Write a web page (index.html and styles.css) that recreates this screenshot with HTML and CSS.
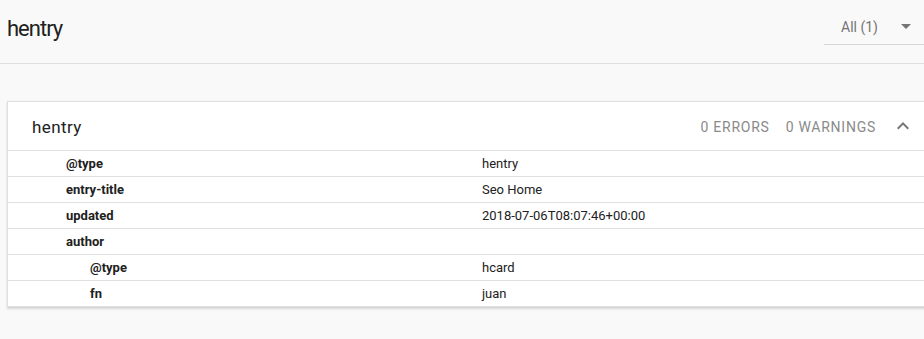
FILE: index.html
```html
<!DOCTYPE html>
<html>
<head>
<meta charset="utf-8">
<link rel="stylesheet" href="styles.css">
</head>
<body>
<header class="topbar">
  <h1 class="page-title">hentry</h1>
  <div class="filter">
    <span class="filter-label">All (1)</span>
    <span class="filter-arrow"></span>
  </div>
</header>
<main class="content">
  <section class="card">
    <div class="card-head">
      <h2 class="card-title">hentry</h2>
      <div class="card-stats">
        <span class="stat">0 ERRORS</span>
        <span class="stat">0 WARNINGS</span>
        <svg class="chevron" width="24" height="24" viewBox="0 0 24 24"><path d="M12 8l-6 6 1.41 1.41L12 10.83l4.59 4.58L18 14z" fill="#757575"/></svg>
      </div>
    </div>
    <div class="props">
      <div class="row"><div class="key">@type</div><div class="val">hentry</div></div>
      <div class="row"><div class="key">entry-title</div><div class="val">Seo Home</div></div>
      <div class="row"><div class="key">updated</div><div class="val">2018-07-06T08:07:46+00:00</div></div>
      <div class="row"><div class="key">author</div><div class="val"></div></div>
      <div class="row"><div class="key nested">@type</div><div class="val">hcard</div></div>
      <div class="row last"><div class="key nested">fn</div><div class="val">juan</div></div>
    </div>
  </section>
</main>
</body>
</html>
```

FILE: styles.css
```css
html, body {
  margin: 0;
  padding: 0;
}
body {
  background: #f9f9f9;
  font-family: Roboto, "Noto Sans", Arial, sans-serif;
  color: #212121;
  overflow: hidden;
  width: 924px;
  height: 339px;
}
.topbar {
  display: flex;
  justify-content: space-between;
  align-items: flex-start;
  height: 63px;
  border-bottom: 1px solid #e0e0e0;
  padding-left: 7px;
}
.page-title {
  margin: 0;
  font-size: 22px;
  font-weight: 400;
  line-height: 57px;
  letter-spacing: -1px;
  color: #212121;
}
.filter {
  display: flex;
  align-items: center;
  justify-content: space-between;
  width: 100px;
  box-sizing: border-box;
  margin-top: 13px;
  height: 32px;
  padding: 0 13px 3px 17px;
  border-bottom: 1px solid #d6d6d6;
}
.filter-label {
  font-size: 14px;
  line-height: 28px;
  color: #757575;
}
.filter-arrow {
  width: 0;
  height: 0;
  border-left: 5px solid transparent;
  border-right: 5px solid transparent;
  border-top: 5px solid #757575;
  margin-bottom: 1px;
}
.content {
  padding: 37px 0 0 7px;
}
.card {
  width: 930px;
  box-sizing: border-box;
  background: #fff;
  border: 1px solid #e0e0e0;
  box-shadow: 0 2px 2px rgba(0, 0, 0, 0.14), 0 0 1px rgba(0, 0, 0, 0.08);
}
.card-head {
  display: flex;
  justify-content: space-between;
  align-items: center;
  height: 48px;
  box-sizing: border-box;
  padding: 2px 21px 0 24px;
  border-bottom: 1px solid #e0e0e0;
  height: 49px;
}
.card-title {
  margin: 0;
  font-size: 17px;
  font-weight: 400;
  letter-spacing: 0.4px;
  color: #212121;
}
.card-stats {
  display: flex;
  align-items: center;
}
.stat {
  font-size: 14px;
  letter-spacing: 0.75px;
  color: #8a8a8a;
  margin-right: 16px;
}
.stat + .stat {
  margin-right: 15px;
}
.chevron {
  display: block;
  margin-top: -2px;
}
.props {
  display: flex;
  flex-direction: column;
}
.row {
  display: grid;
  grid-template-columns: 474px 1fr;
  height: 26px;
  box-sizing: border-box;
  border-bottom: 1px solid #e0e0e0;
  font-size: 13px;
  line-height: 25px;
}
.row.last {
  border-bottom: none;
  height: 25px;
}
.key {
  padding-left: 58px;
  font-weight: 700;
  color: #212121;
}
.key.nested {
  padding-left: 82px;
}
.val {
  color: #212121;
}
```
